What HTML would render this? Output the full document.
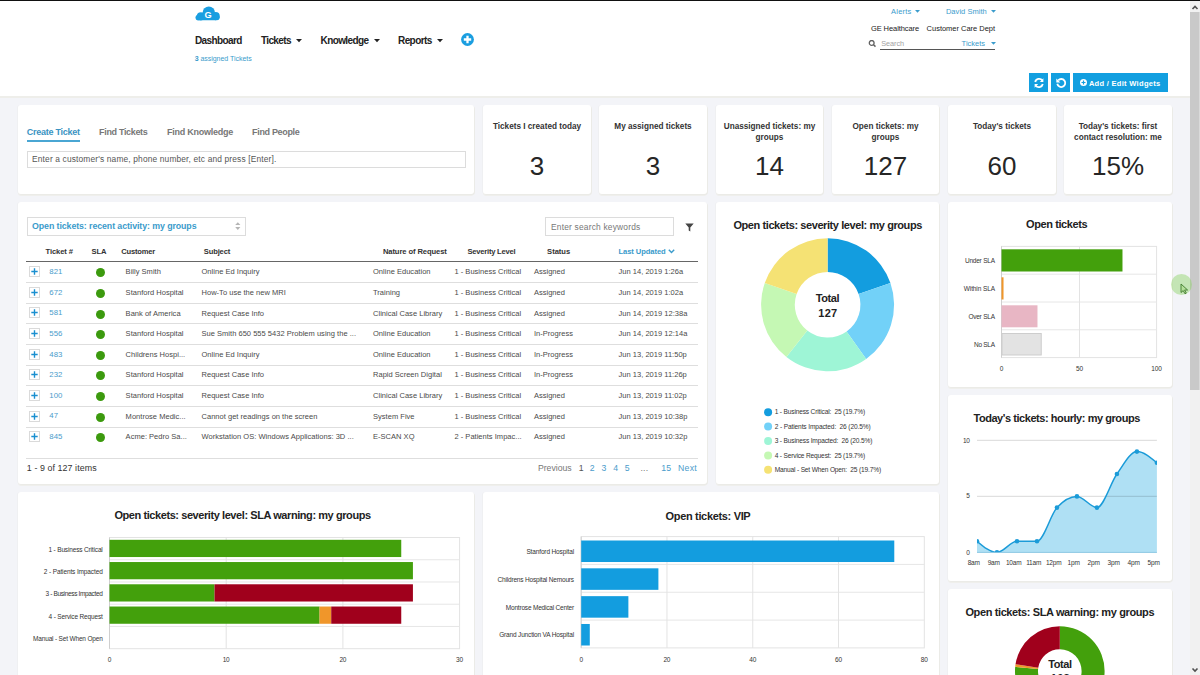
<!DOCTYPE html><html><head><meta charset="utf-8"><style>html,body{margin:0;padding:0}body{width:1200px;height:675px;overflow:hidden;position:relative;background:#f3f4f8;font-family:"Liberation Sans",sans-serif}</style></head><body><div style="position:absolute;left:0px;top:0px;width:1200px;height:96px;background:#fff;"></div><div style="position:absolute;left:0px;top:0px;width:1200px;height:1px;background:#111;"></div><div style="position:absolute;left:0px;top:96px;width:1190px;height:2px;background:#eeeeea;"></div><div style="position:absolute;left:1190px;top:0px;width:10px;height:675px;background:#f1f1f1;"></div><div style="position:absolute;left:1190px;top:0px;width:10px;height:1px;background:#111;"></div><div style="position:absolute;left:1190px;top:12px;width:9px;height:377.6px;background:#c9c9c9;"></div><div style="position:absolute;left:1199px;top:12px;width:1px;height:377.6px;background:#dadada;"></div><svg style="position:absolute;left:1190px;top:2px" width="10" height="10"><path d="M2.5 7 L5 4.5 L7.5 7" stroke="#505050" stroke-width="1.6" fill="none"/></svg><svg style="position:absolute;left:1190px;top:665px" width="10" height="10"><path d="M2.5 3.5 L5 6 L7.5 3.5" stroke="#505050" stroke-width="1.6" fill="none"/></svg><svg style="position:absolute;left:195px;top:6px" width="26" height="15" viewBox="0 0 26 15"><g fill="#1a9ee0"><circle cx="5.9" cy="10.3" r="4.1"/><circle cx="13.8" cy="6.7" r="6.2"/><circle cx="20.6" cy="10.1" r="4.1"/><rect x="2.8" y="9.5" width="19.8" height="4.7" rx="2"/><circle cx="3.4" cy="11.6" r="2.9"/><circle cx="21.8" cy="11.3" r="2.9"/></g><text x="13.2" y="11.9" text-anchor="middle" font-family="Liberation Sans" font-weight="bold" font-size="9.2" fill="#fff">G</text></svg><svg style="position:absolute;left:296.2px;top:39px" width="6" height="4"><path d="M0 0 L6 0 L3 3.3 Z" fill="#222"/></svg><svg style="position:absolute;left:373.6px;top:39px" width="6" height="4"><path d="M0 0 L6 0 L3 3.3 Z" fill="#222"/></svg><svg style="position:absolute;left:437.2px;top:39px" width="6" height="4"><path d="M0 0 L6 0 L3 3.3 Z" fill="#222"/></svg><svg style="position:absolute;left:461.2px;top:32.8px" width="13" height="13" viewBox="0 0 13 13"><circle cx="6.5" cy="6.5" r="6.4" fill="#1a9ee0"/><path d="M6.5 2.8 V10.2 M2.8 6.5 H10.2" stroke="#fff" stroke-width="2.3"/></svg><svg style="position:absolute;left:914.9px;top:10px" width="5" height="3"><path d="M0 0 L5 0 L2.5 2.8 Z" fill="#3b9ccc"/></svg><svg style="position:absolute;left:991.0px;top:10px" width="5" height="3"><path d="M0 0 L5 0 L2.5 2.8 Z" fill="#3b9ccc"/></svg><svg style="position:absolute;left:868px;top:40px" width="9" height="8" viewBox="0 0 9 8"><circle cx="3.7" cy="2.9" r="2.4" stroke="#606060" stroke-width="1.3" fill="none"/><path d="M5.5 4.8 L7.5 6.6" stroke="#606060" stroke-width="1.5"/></svg><svg style="position:absolute;left:991px;top:41.5px" width="5" height="3"><path d="M0 0 L5 0 L2.5 2.8 Z" fill="#3b9ccc"/></svg><div style="position:absolute;left:880px;top:49px;width:115px;height:1px;background:#555;"></div><div style="position:absolute;left:1029px;top:73px;width:19px;height:19px;background:#129fe0;"></div><div style="position:absolute;left:1051px;top:73px;width:19px;height:19px;background:#129fe0;"></div><div style="position:absolute;left:1073px;top:73px;width:95px;height:19px;background:#129fe0;"></div><svg style="position:absolute;left:1032.5px;top:76.5px" width="12" height="12" viewBox="0 0 12 12"><path d="M2.2 5 A4 4 0 0 1 9.4 3.6" stroke="#fff" stroke-width="1.8" fill="none"/><path d="M10.4 1.2 V5 H6.8 Z" fill="#fff"/><path d="M9.8 7 A4 4 0 0 1 2.6 8.4" stroke="#fff" stroke-width="1.8" fill="none"/><path d="M1.6 10.8 V7 H5.2 Z" fill="#fff"/></svg><svg style="position:absolute;left:1054.5px;top:76.5px" width="12" height="12" viewBox="0 0 12 12"><path d="M3.2 3.4 A4 4 0 1 1 2.3 6.8" stroke="#fff" stroke-width="1.8" fill="none"/><path d="M1.3 1.6 V5.6 H5.3 Z" fill="#fff"/></svg><svg style="position:absolute;left:1080px;top:79px" width="7" height="7" viewBox="0 0 7 7"><circle cx="3.5" cy="3.5" r="3.5" fill="#fff"/><path d="M3.5 1.5 V5.5 M1.5 3.5 H5.5" stroke="#129fe0" stroke-width="1.2"/></svg><div style="position:absolute;left:18px;top:105px;width:456px;height:89px;background:#fff;border-radius:3px;box-shadow:1px 1px 0 0 #ebebe7, 0 2px 0 0 #efefec, -1px 0 0 0 #eff0f2"></div><div style="position:absolute;left:483px;top:105px;width:108px;height:89px;background:#fff;border-radius:3px;box-shadow:1px 1px 0 0 #ebebe7, 0 2px 0 0 #efefec, -1px 0 0 0 #eff0f2"></div><div style="position:absolute;left:599px;top:105px;width:108px;height:89px;background:#fff;border-radius:3px;box-shadow:1px 1px 0 0 #ebebe7, 0 2px 0 0 #efefec, -1px 0 0 0 #eff0f2"></div><div style="position:absolute;left:716px;top:105px;width:107px;height:89px;background:#fff;border-radius:3px;box-shadow:1px 1px 0 0 #ebebe7, 0 2px 0 0 #efefec, -1px 0 0 0 #eff0f2"></div><div style="position:absolute;left:832px;top:105px;width:107px;height:89px;background:#fff;border-radius:3px;box-shadow:1px 1px 0 0 #ebebe7, 0 2px 0 0 #efefec, -1px 0 0 0 #eff0f2"></div><div style="position:absolute;left:948px;top:105px;width:108px;height:89px;background:#fff;border-radius:3px;box-shadow:1px 1px 0 0 #ebebe7, 0 2px 0 0 #efefec, -1px 0 0 0 #eff0f2"></div><div style="position:absolute;left:1064px;top:105px;width:108px;height:89px;background:#fff;border-radius:3px;box-shadow:1px 1px 0 0 #ebebe7, 0 2px 0 0 #efefec, -1px 0 0 0 #eff0f2"></div><div style="position:absolute;left:18px;top:202px;width:689px;height:282px;background:#fff;border-radius:3px;box-shadow:1px 1px 0 0 #ebebe7, 0 2px 0 0 #efefec, -1px 0 0 0 #eff0f2"></div><div style="position:absolute;left:716px;top:202px;width:223px;height:282px;background:#fff;border-radius:3px;box-shadow:1px 1px 0 0 #ebebe7, 0 2px 0 0 #efefec, -1px 0 0 0 #eff0f2"></div><div style="position:absolute;left:948px;top:202px;width:224px;height:185px;background:#fff;border-radius:3px;box-shadow:1px 1px 0 0 #ebebe7, 0 2px 0 0 #efefec, -1px 0 0 0 #eff0f2"></div><div style="position:absolute;left:948px;top:395px;width:224px;height:186px;background:#fff;border-radius:3px;box-shadow:1px 1px 0 0 #ebebe7, 0 2px 0 0 #efefec, -1px 0 0 0 #eff0f2"></div><div style="position:absolute;left:948px;top:589px;width:224px;height:131px;background:#fff;border-radius:3px;box-shadow:1px 1px 0 0 #ebebe7, 0 2px 0 0 #efefec, -1px 0 0 0 #eff0f2"></div><div style="position:absolute;left:18px;top:492px;width:456px;height:228px;background:#fff;border-radius:3px;box-shadow:1px 1px 0 0 #ebebe7, 0 2px 0 0 #efefec, -1px 0 0 0 #eff0f2"></div><div style="position:absolute;left:483px;top:492px;width:456px;height:228px;background:#fff;border-radius:3px;box-shadow:1px 1px 0 0 #ebebe7, 0 2px 0 0 #efefec, -1px 0 0 0 #eff0f2"></div><div style="position:absolute;left:27px;top:140px;width:53px;height:2px;background:#4aa6d3;"></div><div style="position:absolute;left:26.5px;top:150.5px;width:439px;height:17px;border:1px solid #dcdcdc;box-sizing:border-box"></div><div style="position:absolute;left:26.5px;top:217px;width:219px;height:19px;border:1px solid #dcdcdc;box-sizing:border-box"></div><svg style="position:absolute;left:235px;top:222px" width="6" height="9"><path d="M0.2 3.1 L2.8 0.3 L5.4 3.1 Z M0.2 4.9 L2.8 7.9 L5.4 4.9 Z" fill="#b5b5b5"/></svg><div style="position:absolute;left:545px;top:217px;width:129px;height:19px;border:1px solid #dcdcdc;box-sizing:border-box"></div><svg style="position:absolute;left:685px;top:222.5px" width="9" height="9" viewBox="0 0 9 9"><path d="M0.3 0.5 H8.7 L5.3 4.4 V8.5 L3.7 7.4 V4.4 Z" fill="#444"/></svg><svg style="position:absolute;left:668px;top:248.5px" width="7" height="5"><path d="M0.8 0.8 L3.5 3.6 L6.2 0.8" stroke="#3a9bcb" stroke-width="1.4" fill="none"/></svg><div style="position:absolute;left:26px;top:260.5px;width:672px;height:1.5px;background:#666;"></div><div style="position:absolute;left:26px;top:282.13px;width:672px;height:1px;background:#dedede;"></div><div style="position:absolute;left:29px;top:266.10px;width:11px;height:11px;border:1px solid #dadada;box-sizing:border-box"></div><svg style="position:absolute;left:29px;top:266.10px" width="11" height="11"><path d="M5.5 2.3 V8.7 M2.3 5.5 H8.7" stroke="#1a8fd0" stroke-width="1.4"/></svg><div style="position:absolute;left:95.7px;top:268.3px;width:9px;height:9px;border-radius:50%;background:#3c9a0e"></div><div style="position:absolute;left:26px;top:302.76px;width:672px;height:1px;background:#dedede;"></div><div style="position:absolute;left:29px;top:286.73px;width:11px;height:11px;border:1px solid #dadada;box-sizing:border-box"></div><svg style="position:absolute;left:29px;top:286.73px" width="11" height="11"><path d="M5.5 2.3 V8.7 M2.3 5.5 H8.7" stroke="#1a8fd0" stroke-width="1.4"/></svg><div style="position:absolute;left:95.7px;top:288.93px;width:9px;height:9px;border-radius:50%;background:#3c9a0e"></div><div style="position:absolute;left:26px;top:323.39px;width:672px;height:1px;background:#dedede;"></div><div style="position:absolute;left:29px;top:307.36px;width:11px;height:11px;border:1px solid #dadada;box-sizing:border-box"></div><svg style="position:absolute;left:29px;top:307.36px" width="11" height="11"><path d="M5.5 2.3 V8.7 M2.3 5.5 H8.7" stroke="#1a8fd0" stroke-width="1.4"/></svg><div style="position:absolute;left:95.7px;top:309.56px;width:9px;height:9px;border-radius:50%;background:#3c9a0e"></div><div style="position:absolute;left:26px;top:344.02px;width:672px;height:1px;background:#dedede;"></div><div style="position:absolute;left:29px;top:327.99px;width:11px;height:11px;border:1px solid #dadada;box-sizing:border-box"></div><svg style="position:absolute;left:29px;top:327.99px" width="11" height="11"><path d="M5.5 2.3 V8.7 M2.3 5.5 H8.7" stroke="#1a8fd0" stroke-width="1.4"/></svg><div style="position:absolute;left:95.7px;top:330.19px;width:9px;height:9px;border-radius:50%;background:#3c9a0e"></div><div style="position:absolute;left:26px;top:364.65px;width:672px;height:1px;background:#dedede;"></div><div style="position:absolute;left:29px;top:348.62px;width:11px;height:11px;border:1px solid #dadada;box-sizing:border-box"></div><svg style="position:absolute;left:29px;top:348.62px" width="11" height="11"><path d="M5.5 2.3 V8.7 M2.3 5.5 H8.7" stroke="#1a8fd0" stroke-width="1.4"/></svg><div style="position:absolute;left:95.7px;top:350.82px;width:9px;height:9px;border-radius:50%;background:#3c9a0e"></div><div style="position:absolute;left:26px;top:385.28px;width:672px;height:1px;background:#dedede;"></div><div style="position:absolute;left:29px;top:369.25px;width:11px;height:11px;border:1px solid #dadada;box-sizing:border-box"></div><svg style="position:absolute;left:29px;top:369.25px" width="11" height="11"><path d="M5.5 2.3 V8.7 M2.3 5.5 H8.7" stroke="#1a8fd0" stroke-width="1.4"/></svg><div style="position:absolute;left:95.7px;top:371.45px;width:9px;height:9px;border-radius:50%;background:#3c9a0e"></div><div style="position:absolute;left:26px;top:405.90999999999997px;width:672px;height:1px;background:#dedede;"></div><div style="position:absolute;left:29px;top:389.88px;width:11px;height:11px;border:1px solid #dadada;box-sizing:border-box"></div><svg style="position:absolute;left:29px;top:389.88px" width="11" height="11"><path d="M5.5 2.3 V8.7 M2.3 5.5 H8.7" stroke="#1a8fd0" stroke-width="1.4"/></svg><div style="position:absolute;left:95.7px;top:392.08px;width:9px;height:9px;border-radius:50%;background:#3c9a0e"></div><div style="position:absolute;left:26px;top:426.53999999999996px;width:672px;height:1px;background:#dedede;"></div><div style="position:absolute;left:29px;top:410.51px;width:11px;height:11px;border:1px solid #dadada;box-sizing:border-box"></div><svg style="position:absolute;left:29px;top:410.51px" width="11" height="11"><path d="M5.5 2.3 V8.7 M2.3 5.5 H8.7" stroke="#1a8fd0" stroke-width="1.4"/></svg><div style="position:absolute;left:95.7px;top:412.71px;width:9px;height:9px;border-radius:50%;background:#3c9a0e"></div><div style="position:absolute;left:29px;top:431.14px;width:11px;height:11px;border:1px solid #dadada;box-sizing:border-box"></div><svg style="position:absolute;left:29px;top:431.14px" width="11" height="11"><path d="M5.5 2.3 V8.7 M2.3 5.5 H8.7" stroke="#1a8fd0" stroke-width="1.4"/></svg><div style="position:absolute;left:95.7px;top:433.34px;width:9px;height:9px;border-radius:50%;background:#3c9a0e"></div><div style="position:absolute;left:26px;top:457.5px;width:672px;height:1px;background:#dedede;"></div><svg style="position:absolute;left:0;top:0" width="1200" height="675" viewBox="0 0 1200 675"><path d="M827.60 238.30 A66.5 66.5 0 0 1 890.43 283.00 L858.59 294.05 A32.8 32.8 0 0 0 827.60 272.00 Z" fill="#139ddf"/><path d="M890.43 283.00 A66.5 66.5 0 0 1 866.15 358.98 L846.62 331.53 A32.8 32.8 0 0 0 858.59 294.05 Z" fill="#72d1f8"/><path d="M866.15 358.98 A66.5 66.5 0 0 1 786.41 357.01 L807.29 330.55 A32.8 32.8 0 0 0 846.62 331.53 Z" fill="#9ef5d6"/><path d="M786.41 357.01 A66.5 66.5 0 0 1 764.77 283.00 L796.61 294.05 A32.8 32.8 0 0 0 807.29 330.55 Z" fill="#c5f8b4"/><path d="M764.77 283.00 A66.5 66.5 0 0 1 827.60 238.30 L827.60 272.00 A32.8 32.8 0 0 0 796.61 294.05 Z" fill="#f5e274"/><circle cx="768.1" cy="412.20" r="4" fill="#139ddf"/><circle cx="768.1" cy="426.60" r="4" fill="#72d1f8"/><circle cx="768.1" cy="441.00" r="4" fill="#9ef5d6"/><circle cx="768.1" cy="455.40" r="4" fill="#c5f8b4"/><circle cx="768.1" cy="469.80" r="4" fill="#f5e274"/><rect x="1001.5" y="246.4" width="155.0999999999999" height="111.20000000000002" fill="none" stroke="#e3e3e3" stroke-width="1"/><line x1="1001.5" y1="274.20" x2="1156.6" y2="274.20" stroke="#e6e6e6" stroke-width="1"/><line x1="1001.5" y1="302.00" x2="1156.6" y2="302.00" stroke="#e6e6e6" stroke-width="1"/><line x1="1001.5" y1="329.80" x2="1156.6" y2="329.80" stroke="#e6e6e6" stroke-width="1"/><line x1="1079.5" y1="246.4" x2="1079.5" y2="357.6" stroke="#e3e3e3" stroke-width="1"/><line x1="1001.5" y1="246.4" x2="1001.5" y2="357.6" stroke="#cfcfcf" stroke-width="1"/><rect x="1001.5" y="249.3" width="120.98" height="22.2" fill="#43a00c"/><rect x="1001.5" y="277.3" width="2.02" height="22.2" fill="#f0962a"/><rect x="1001.5" y="305.3" width="35.98" height="22" fill="#e8b6c4"/><rect x="1002.0" y="333.5" width="39.24" height="21.5" fill="#e3e3e3" stroke="#cdcdcd" stroke-width="1"/><defs><clipPath id="hc"><rect x="977" y="430" width="179.9000000000001" height="122.99999999999997"/></clipPath></defs><path d="M977.00 541.20 C983.66 546.80 990.33 552.40 996.99 552.40 C1003.65 552.40 1010.31 541.20 1016.98 541.20 C1023.64 541.20 1030.30 541.20 1036.97 541.20 C1043.63 541.20 1050.29 515.07 1056.96 507.60 C1063.62 500.13 1070.28 496.40 1076.94 496.40 C1083.61 496.40 1090.27 507.60 1096.93 507.60 C1103.60 507.60 1110.26 483.33 1116.92 474.00 C1123.59 464.67 1130.25 451.60 1136.91 451.60 C1143.57 451.60 1150.24 457.20 1156.90 462.80 L1156.9 552.4 L977 552.4 Z" fill="#afe0f4"/><line x1="977" y1="440.40" x2="1156.9" y2="440.40" stroke="rgba(0,0,0,0.12)" stroke-width="1.2"/><line x1="977" y1="496.40" x2="1156.9" y2="496.40" stroke="rgba(0,0,0,0.12)" stroke-width="1.2"/><g clip-path="url(#hc)"><path d="M977.00 541.20 C983.66 546.80 990.33 552.40 996.99 552.40 C1003.65 552.40 1010.31 541.20 1016.98 541.20 C1023.64 541.20 1030.30 541.20 1036.97 541.20 C1043.63 541.20 1050.29 515.07 1056.96 507.60 C1063.62 500.13 1070.28 496.40 1076.94 496.40 C1083.61 496.40 1090.27 507.60 1096.93 507.60 C1103.60 507.60 1110.26 483.33 1116.92 474.00 C1123.59 464.67 1130.25 451.60 1136.91 451.60 C1143.57 451.60 1150.24 457.20 1156.90 462.80" fill="none" stroke="#1b9bd8" stroke-width="1.5"/><circle cx="977.00" cy="541.20" r="2.3" fill="#1b9bd8"/><circle cx="996.99" cy="552.40" r="2.3" fill="#1b9bd8"/><circle cx="1016.98" cy="541.20" r="2.3" fill="#1b9bd8"/><circle cx="1036.97" cy="541.20" r="2.3" fill="#1b9bd8"/><circle cx="1056.96" cy="507.60" r="2.3" fill="#1b9bd8"/><circle cx="1076.94" cy="496.40" r="2.3" fill="#1b9bd8"/><circle cx="1096.93" cy="507.60" r="2.3" fill="#1b9bd8"/><circle cx="1116.92" cy="474.00" r="2.3" fill="#1b9bd8"/><circle cx="1136.91" cy="451.60" r="2.3" fill="#1b9bd8"/><circle cx="1156.90" cy="462.80" r="2.3" fill="#1b9bd8"/></g><line x1="977" y1="552.4" x2="1156.9" y2="552.4" stroke="#8fc9e3" stroke-width="1"/><path d="M1059.80 626.20 A44.8 44.8 0 1 1 1015.19 666.86 L1038.09 668.99 A21.8 21.8 0 1 0 1059.80 649.20 Z" fill="#43a00c"/><path d="M1015.19 666.86 A44.8 44.8 0 0 1 1015.53 664.15 L1038.26 667.66 A21.8 21.8 0 0 0 1038.09 668.99 Z" fill="#f0962a"/><path d="M1015.53 664.15 A44.8 44.8 0 0 1 1059.80 626.20 L1059.80 649.20 A21.8 21.8 0 0 0 1038.26 667.66 Z" fill="#a0001c"/><rect x="109.5" y="537.5" width="350.1" height="111.20000000000005" fill="none" stroke="#e3e3e3" stroke-width="1"/><line x1="109.5" y1="559.74" x2="459.6" y2="559.74" stroke="#e6e6e6" stroke-width="1"/><line x1="109.5" y1="581.98" x2="459.6" y2="581.98" stroke="#e6e6e6" stroke-width="1"/><line x1="109.5" y1="604.22" x2="459.6" y2="604.22" stroke="#e6e6e6" stroke-width="1"/><line x1="109.5" y1="626.46" x2="459.6" y2="626.46" stroke="#e6e6e6" stroke-width="1"/><line x1="226.20" y1="537.5" x2="226.20" y2="648.7" stroke="#e3e3e3" stroke-width="1"/><line x1="342.90" y1="537.5" x2="342.90" y2="648.7" stroke="#e3e3e3" stroke-width="1"/><line x1="109.5" y1="537.5" x2="109.5" y2="648.7" stroke="#cfcfcf" stroke-width="1"/><rect x="109.50" y="539.80" width="291.75" height="17.24" fill="#43a00c"/><rect x="109.50" y="562.04" width="303.42" height="17.24" fill="#43a00c"/><rect x="109.50" y="584.28" width="105.03" height="17.24" fill="#43a00c"/><rect x="214.53" y="584.28" width="198.39" height="17.24" fill="#a0001c"/><rect x="109.50" y="606.52" width="210.06" height="17.24" fill="#43a00c"/><rect x="319.56" y="606.52" width="11.67" height="17.24" fill="#f0962a"/><rect x="331.23" y="606.52" width="70.02" height="17.24" fill="#a0001c"/><rect x="581.2" y="536.6" width="343.0999999999999" height="111.29999999999995" fill="none" stroke="#e3e3e3" stroke-width="1"/><line x1="581.2" y1="564.42" x2="924.3" y2="564.42" stroke="#e6e6e6" stroke-width="1"/><line x1="581.2" y1="592.25" x2="924.3" y2="592.25" stroke="#e6e6e6" stroke-width="1"/><line x1="581.2" y1="620.08" x2="924.3" y2="620.08" stroke="#e6e6e6" stroke-width="1"/><line x1="666.98" y1="536.6" x2="666.98" y2="647.9" stroke="#e3e3e3" stroke-width="1"/><line x1="752.75" y1="536.6" x2="752.75" y2="647.9" stroke="#e3e3e3" stroke-width="1"/><line x1="838.52" y1="536.6" x2="838.52" y2="647.9" stroke="#e3e3e3" stroke-width="1"/><line x1="581.2" y1="536.6" x2="581.2" y2="647.9" stroke="#cfcfcf" stroke-width="1"/><rect x="581.2" y="540.50" width="313.08" height="21.52" fill="#139ddf"/><rect x="581.2" y="568.32" width="77.20" height="21.52" fill="#139ddf"/><rect x="581.2" y="596.15" width="47.18" height="21.52" fill="#139ddf"/><rect x="581.2" y="623.98" width="8.58" height="21.52" fill="#139ddf"/></svg><div id="t0" style="position:absolute;left:195.00px;top:36.34px;font-size:10px;line-height:10px;font-weight:700;color:#222;letter-spacing:-0.617px;white-space:nowrap;">Dashboard</div><div id="t1" style="position:absolute;left:261.00px;top:36.34px;font-size:10px;line-height:10px;font-weight:700;color:#222;letter-spacing:-0.633px;white-space:nowrap;">Tickets</div><div id="t2" style="position:absolute;left:320.50px;top:36.34px;font-size:10px;line-height:10px;font-weight:700;color:#222;letter-spacing:-0.593px;white-space:nowrap;">Knowledge</div><div id="t3" style="position:absolute;left:398.00px;top:36.34px;font-size:10px;line-height:10px;font-weight:700;color:#222;letter-spacing:-0.583px;white-space:nowrap;">Reports</div><div id="t4" style="position:absolute;left:194.65px;top:55.27px;font-size:7px;line-height:7px;font-weight:400;color:#3b9ccc;letter-spacing:-0.032px;white-space:nowrap;"><b>3</b> assigned Tickets</div><div id="t5" style="position:absolute;left:891.12px;top:8.05px;font-size:7.5px;line-height:7.5px;font-weight:400;color:#3b9ccc;letter-spacing:0.186px;white-space:nowrap;">Alerts</div><div id="t6" style="position:absolute;left:945.92px;top:8.05px;font-size:7.5px;line-height:7.5px;font-weight:400;color:#3b9ccc;letter-spacing:0.046px;white-space:nowrap;">David Smith</div><div id="t7" style="position:absolute;left:870.92px;top:24.65px;font-size:7.5px;line-height:7.5px;font-weight:400;color:#222;letter-spacing:-0.075px;white-space:nowrap;">GE Healthcare</div><div id="t8" style="position:absolute;left:926.62px;top:24.65px;font-size:7.5px;line-height:7.5px;font-weight:400;color:#222;letter-spacing:-0.022px;white-space:nowrap;">Customer Care Dept</div><div id="t9" style="position:absolute;left:881.24px;top:40.02px;font-size:7.3px;line-height:7.3px;font-weight:400;color:#a3a3a3;letter-spacing:-0.068px;white-space:nowrap;">Search</div><div id="t10" style="position:absolute;left:961.62px;top:39.85px;font-size:7.5px;line-height:7.5px;font-weight:400;color:#3b9ccc;letter-spacing:-0.014px;white-space:nowrap;">Tickets</div><div id="t11" style="position:absolute;left:1088.92px;top:79.55px;font-size:7.5px;line-height:7.5px;font-weight:700;color:#fff;letter-spacing:0.301px;white-space:nowrap;">Add / Edit Widgets</div><div id="t12" style="position:absolute;left:26.65px;top:127.78px;font-size:9px;line-height:9px;font-weight:700;color:#3a93c2;letter-spacing:-0.246px;white-space:nowrap;">Create Ticket</div><div id="t13" style="position:absolute;left:99.05px;top:127.78px;font-size:9px;line-height:9px;font-weight:700;color:#777;letter-spacing:-0.331px;white-space:nowrap;">Find Tickets</div><div id="t14" style="position:absolute;left:167.05px;top:127.78px;font-size:9px;line-height:9px;font-weight:700;color:#777;letter-spacing:-0.252px;white-space:nowrap;">Find Knowledge</div><div id="t15" style="position:absolute;left:252.05px;top:127.78px;font-size:9px;line-height:9px;font-weight:700;color:#777;letter-spacing:-0.330px;white-space:nowrap;">Find People</div><div id="t16" style="position:absolute;left:32.08px;top:155.29px;font-size:8.4px;line-height:8.4px;font-weight:400;color:#555;letter-spacing:0.148px;white-space:nowrap;">Enter a customer's name, phone number, etc and press [Enter].</div><div id="t17" style="position:absolute;left:492.93px;top:123.26px;font-size:8.2px;line-height:8.2px;font-weight:700;color:#333;letter-spacing:0.000px;white-space:nowrap;">Tickets I created today</div><div id="t18" style="position:absolute;left:529.77px;top:153.39px;font-size:26px;line-height:26px;font-weight:400;color:#262626;letter-spacing:0.000px;white-space:nowrap;">3</div><div id="t19" style="position:absolute;left:614.32px;top:123.26px;font-size:8.2px;line-height:8.2px;font-weight:700;color:#333;letter-spacing:0.000px;white-space:nowrap;">My assigned tickets</div><div id="t20" style="position:absolute;left:645.77px;top:153.39px;font-size:26px;line-height:26px;font-weight:400;color:#262626;letter-spacing:0.000px;white-space:nowrap;">3</div><div id="t21" style="position:absolute;left:723.77px;top:123.26px;font-size:8.2px;line-height:8.2px;font-weight:700;color:#333;letter-spacing:0.000px;white-space:nowrap;">Unassigned tickets: my</div><div id="t22" style="position:absolute;left:755.62px;top:133.96px;font-size:8.2px;line-height:8.2px;font-weight:700;color:#333;letter-spacing:0.000px;white-space:nowrap;">groups</div><div id="t23" style="position:absolute;left:755.04px;top:153.39px;font-size:26px;line-height:26px;font-weight:400;color:#262626;letter-spacing:0.000px;white-space:nowrap;">14</div><div id="t24" style="position:absolute;left:852.51px;top:123.26px;font-size:8.2px;line-height:8.2px;font-weight:700;color:#333;letter-spacing:0.000px;white-space:nowrap;">Open tickets: my</div><div id="t25" style="position:absolute;left:871.62px;top:133.96px;font-size:8.2px;line-height:8.2px;font-weight:700;color:#333;letter-spacing:0.000px;white-space:nowrap;">groups</div><div id="t26" style="position:absolute;left:863.80px;top:153.39px;font-size:26px;line-height:26px;font-weight:400;color:#262626;letter-spacing:0.000px;white-space:nowrap;">127</div><div id="t27" style="position:absolute;left:972.88px;top:123.26px;font-size:8.2px;line-height:8.2px;font-weight:700;color:#333;letter-spacing:0.000px;white-space:nowrap;">Today's tickets</div><div id="t28" style="position:absolute;left:987.54px;top:153.39px;font-size:26px;line-height:26px;font-weight:400;color:#262626;letter-spacing:0.000px;white-space:nowrap;">60</div><div id="t29" style="position:absolute;left:1078.65px;top:123.26px;font-size:8.2px;line-height:8.2px;font-weight:700;color:#333;letter-spacing:0.000px;white-space:nowrap;">Today's tickets: first</div><div id="t30" style="position:absolute;left:1074.09px;top:133.96px;font-size:8.2px;line-height:8.2px;font-weight:700;color:#333;letter-spacing:0.000px;white-space:nowrap;">contact resolution: me</div><div id="t31" style="position:absolute;left:1091.98px;top:153.39px;font-size:26px;line-height:26px;font-weight:400;color:#262626;letter-spacing:0.000px;white-space:nowrap;">15%</div><div id="t32" style="position:absolute;left:32.06px;top:222.45px;font-size:8.8px;line-height:8.8px;font-weight:700;color:#3a9bcb;letter-spacing:-0.082px;white-space:nowrap;">Open tickets: recent activity: my groups</div><div id="t33" style="position:absolute;left:551.08px;top:223.09px;font-size:8.4px;line-height:8.4px;font-weight:400;color:#777;letter-spacing:0.199px;white-space:nowrap;">Enter search keywords</div><div id="t34" style="position:absolute;left:45.52px;top:247.67px;font-size:7.6px;line-height:7.6px;font-weight:700;color:#333;letter-spacing:-0.107px;white-space:nowrap;">Ticket #</div><div id="t35" style="position:absolute;left:91.52px;top:247.67px;font-size:7.6px;line-height:7.6px;font-weight:700;color:#333;letter-spacing:-0.090px;white-space:nowrap;">SLA</div><div id="t36" style="position:absolute;left:121.22px;top:247.67px;font-size:7.6px;line-height:7.6px;font-weight:700;color:#333;letter-spacing:-0.206px;white-space:nowrap;">Customer</div><div id="t37" style="position:absolute;left:203.82px;top:247.67px;font-size:7.6px;line-height:7.6px;font-weight:700;color:#333;letter-spacing:-0.172px;white-space:nowrap;">Subject</div><div id="t38" style="position:absolute;left:382.92px;top:247.67px;font-size:7.6px;line-height:7.6px;font-weight:700;color:#333;letter-spacing:-0.094px;white-space:nowrap;">Nature of Request</div><div id="t39" style="position:absolute;left:467.52px;top:247.67px;font-size:7.6px;line-height:7.6px;font-weight:700;color:#333;letter-spacing:-0.230px;white-space:nowrap;">Severity Level</div><div id="t40" style="position:absolute;left:547.12px;top:247.67px;font-size:7.6px;line-height:7.6px;font-weight:700;color:#333;letter-spacing:-0.022px;white-space:nowrap;">Status</div><div id="t41" style="position:absolute;left:618.52px;top:247.67px;font-size:7.6px;line-height:7.6px;font-weight:700;color:#3a9bcb;letter-spacing:-0.082px;white-space:nowrap;">Last Updated</div><div id="t42" style="position:absolute;left:49.31px;top:268.00px;font-size:7.8px;line-height:7.8px;font-weight:400;color:#4a9ccb;letter-spacing:0.000px;white-space:nowrap;">821</div><div id="t43" style="position:absolute;left:125.62px;top:268.25px;font-size:7.5px;line-height:7.5px;font-weight:400;color:#4a4a4a;letter-spacing:0.024px;white-space:nowrap;">Billy Smith</div><div id="t44" style="position:absolute;left:201.53px;top:268.25px;font-size:7.5px;line-height:7.5px;font-weight:400;color:#4a4a4a;letter-spacing:0.024px;white-space:nowrap;">Online Ed Inquiry</div><div id="t45" style="position:absolute;left:373.02px;top:268.25px;font-size:7.5px;line-height:7.5px;font-weight:400;color:#4a4a4a;letter-spacing:0.024px;white-space:nowrap;">Online Education</div><div id="t46" style="position:absolute;left:454.43px;top:268.25px;font-size:7.5px;line-height:7.5px;font-weight:400;color:#4a4a4a;letter-spacing:0.024px;white-space:nowrap;">1 - Business Critical</div><div id="t47" style="position:absolute;left:533.92px;top:268.25px;font-size:7.5px;line-height:7.5px;font-weight:400;color:#4a4a4a;letter-spacing:0.024px;white-space:nowrap;">Assigned</div><div id="t48" style="position:absolute;left:618.52px;top:268.25px;font-size:7.5px;line-height:7.5px;font-weight:400;color:#4a4a4a;letter-spacing:0.024px;white-space:nowrap;">Jun 14, 2019 1:26a</div><div id="t49" style="position:absolute;left:49.31px;top:288.63px;font-size:7.8px;line-height:7.8px;font-weight:400;color:#4a9ccb;letter-spacing:0.000px;white-space:nowrap;">672</div><div id="t50" style="position:absolute;left:125.62px;top:288.88px;font-size:7.5px;line-height:7.5px;font-weight:400;color:#4a4a4a;letter-spacing:0.024px;white-space:nowrap;">Stanford Hospital</div><div id="t51" style="position:absolute;left:201.53px;top:288.88px;font-size:7.5px;line-height:7.5px;font-weight:400;color:#4a4a4a;letter-spacing:0.024px;white-space:nowrap;">How-To use the new MRI</div><div id="t52" style="position:absolute;left:373.02px;top:288.88px;font-size:7.5px;line-height:7.5px;font-weight:400;color:#4a4a4a;letter-spacing:0.024px;white-space:nowrap;">Training</div><div id="t53" style="position:absolute;left:454.43px;top:288.88px;font-size:7.5px;line-height:7.5px;font-weight:400;color:#4a4a4a;letter-spacing:0.024px;white-space:nowrap;">1 - Business Critical</div><div id="t54" style="position:absolute;left:533.92px;top:288.88px;font-size:7.5px;line-height:7.5px;font-weight:400;color:#4a4a4a;letter-spacing:0.024px;white-space:nowrap;">Assigned</div><div id="t55" style="position:absolute;left:618.52px;top:288.88px;font-size:7.5px;line-height:7.5px;font-weight:400;color:#4a4a4a;letter-spacing:0.024px;white-space:nowrap;">Jun 14, 2019 1:02a</div><div id="t56" style="position:absolute;left:49.31px;top:309.26px;font-size:7.8px;line-height:7.8px;font-weight:400;color:#4a9ccb;letter-spacing:0.000px;white-space:nowrap;">581</div><div id="t57" style="position:absolute;left:125.62px;top:309.51px;font-size:7.5px;line-height:7.5px;font-weight:400;color:#4a4a4a;letter-spacing:0.024px;white-space:nowrap;">Bank of America</div><div id="t58" style="position:absolute;left:201.53px;top:309.51px;font-size:7.5px;line-height:7.5px;font-weight:400;color:#4a4a4a;letter-spacing:0.024px;white-space:nowrap;">Request Case Info</div><div id="t59" style="position:absolute;left:373.02px;top:309.51px;font-size:7.5px;line-height:7.5px;font-weight:400;color:#4a4a4a;letter-spacing:0.024px;white-space:nowrap;">Clinical Case Library</div><div id="t60" style="position:absolute;left:454.43px;top:309.51px;font-size:7.5px;line-height:7.5px;font-weight:400;color:#4a4a4a;letter-spacing:0.024px;white-space:nowrap;">1 - Business Critical</div><div id="t61" style="position:absolute;left:533.92px;top:309.51px;font-size:7.5px;line-height:7.5px;font-weight:400;color:#4a4a4a;letter-spacing:0.024px;white-space:nowrap;">Assigned</div><div id="t62" style="position:absolute;left:618.52px;top:309.51px;font-size:7.5px;line-height:7.5px;font-weight:400;color:#4a4a4a;letter-spacing:0.024px;white-space:nowrap;">Jun 14, 2019 12:38a</div><div id="t63" style="position:absolute;left:49.31px;top:329.89px;font-size:7.8px;line-height:7.8px;font-weight:400;color:#4a9ccb;letter-spacing:0.000px;white-space:nowrap;">556</div><div id="t64" style="position:absolute;left:125.62px;top:330.14px;font-size:7.5px;line-height:7.5px;font-weight:400;color:#4a4a4a;letter-spacing:0.024px;white-space:nowrap;">Stanford Hospital</div><div id="t65" style="position:absolute;left:201.53px;top:330.14px;font-size:7.5px;line-height:7.5px;font-weight:400;color:#4a4a4a;letter-spacing:0.024px;white-space:nowrap;">Sue Smith 650 555 5432 Problem using the ...</div><div id="t66" style="position:absolute;left:373.02px;top:330.14px;font-size:7.5px;line-height:7.5px;font-weight:400;color:#4a4a4a;letter-spacing:0.024px;white-space:nowrap;">Online Education</div><div id="t67" style="position:absolute;left:454.43px;top:330.14px;font-size:7.5px;line-height:7.5px;font-weight:400;color:#4a4a4a;letter-spacing:0.024px;white-space:nowrap;">1 - Business Critical</div><div id="t68" style="position:absolute;left:533.92px;top:330.14px;font-size:7.5px;line-height:7.5px;font-weight:400;color:#4a4a4a;letter-spacing:0.024px;white-space:nowrap;">In-Progress</div><div id="t69" style="position:absolute;left:618.52px;top:330.14px;font-size:7.5px;line-height:7.5px;font-weight:400;color:#4a4a4a;letter-spacing:0.024px;white-space:nowrap;">Jun 14, 2019 12:14a</div><div id="t70" style="position:absolute;left:49.31px;top:350.52px;font-size:7.8px;line-height:7.8px;font-weight:400;color:#4a9ccb;letter-spacing:0.000px;white-space:nowrap;">483</div><div id="t71" style="position:absolute;left:125.62px;top:350.77px;font-size:7.5px;line-height:7.5px;font-weight:400;color:#4a4a4a;letter-spacing:0.024px;white-space:nowrap;">Childrens Hospi...</div><div id="t72" style="position:absolute;left:201.53px;top:350.77px;font-size:7.5px;line-height:7.5px;font-weight:400;color:#4a4a4a;letter-spacing:0.024px;white-space:nowrap;">Online Ed Inquiry</div><div id="t73" style="position:absolute;left:373.02px;top:350.77px;font-size:7.5px;line-height:7.5px;font-weight:400;color:#4a4a4a;letter-spacing:0.024px;white-space:nowrap;">Online Education</div><div id="t74" style="position:absolute;left:454.43px;top:350.77px;font-size:7.5px;line-height:7.5px;font-weight:400;color:#4a4a4a;letter-spacing:0.024px;white-space:nowrap;">1 - Business Critical</div><div id="t75" style="position:absolute;left:533.92px;top:350.77px;font-size:7.5px;line-height:7.5px;font-weight:400;color:#4a4a4a;letter-spacing:0.024px;white-space:nowrap;">In-Progress</div><div id="t76" style="position:absolute;left:618.52px;top:350.77px;font-size:7.5px;line-height:7.5px;font-weight:400;color:#4a4a4a;letter-spacing:0.024px;white-space:nowrap;">Jun 13, 2019 11:50p</div><div id="t77" style="position:absolute;left:49.31px;top:371.15px;font-size:7.8px;line-height:7.8px;font-weight:400;color:#4a9ccb;letter-spacing:0.000px;white-space:nowrap;">232</div><div id="t78" style="position:absolute;left:125.62px;top:371.40px;font-size:7.5px;line-height:7.5px;font-weight:400;color:#4a4a4a;letter-spacing:0.024px;white-space:nowrap;">Stanford Hospital</div><div id="t79" style="position:absolute;left:201.53px;top:371.40px;font-size:7.5px;line-height:7.5px;font-weight:400;color:#4a4a4a;letter-spacing:0.024px;white-space:nowrap;">Request Case Info</div><div id="t80" style="position:absolute;left:373.02px;top:371.40px;font-size:7.5px;line-height:7.5px;font-weight:400;color:#4a4a4a;letter-spacing:0.024px;white-space:nowrap;">Rapid Screen Digital</div><div id="t81" style="position:absolute;left:454.43px;top:371.40px;font-size:7.5px;line-height:7.5px;font-weight:400;color:#4a4a4a;letter-spacing:0.024px;white-space:nowrap;">1 - Business Critical</div><div id="t82" style="position:absolute;left:533.92px;top:371.40px;font-size:7.5px;line-height:7.5px;font-weight:400;color:#4a4a4a;letter-spacing:0.024px;white-space:nowrap;">In-Progress</div><div id="t83" style="position:absolute;left:618.52px;top:371.40px;font-size:7.5px;line-height:7.5px;font-weight:400;color:#4a4a4a;letter-spacing:0.024px;white-space:nowrap;">Jun 13, 2019 11:26p</div><div id="t84" style="position:absolute;left:49.31px;top:391.78px;font-size:7.8px;line-height:7.8px;font-weight:400;color:#4a9ccb;letter-spacing:0.000px;white-space:nowrap;">100</div><div id="t85" style="position:absolute;left:125.62px;top:392.03px;font-size:7.5px;line-height:7.5px;font-weight:400;color:#4a4a4a;letter-spacing:0.024px;white-space:nowrap;">Stanford Hospital</div><div id="t86" style="position:absolute;left:201.53px;top:392.03px;font-size:7.5px;line-height:7.5px;font-weight:400;color:#4a4a4a;letter-spacing:0.024px;white-space:nowrap;">Request Case Info</div><div id="t87" style="position:absolute;left:373.02px;top:392.03px;font-size:7.5px;line-height:7.5px;font-weight:400;color:#4a4a4a;letter-spacing:0.024px;white-space:nowrap;">Clinical Case Library</div><div id="t88" style="position:absolute;left:454.43px;top:392.03px;font-size:7.5px;line-height:7.5px;font-weight:400;color:#4a4a4a;letter-spacing:0.024px;white-space:nowrap;">1 - Business Critical</div><div id="t89" style="position:absolute;left:533.92px;top:392.03px;font-size:7.5px;line-height:7.5px;font-weight:400;color:#4a4a4a;letter-spacing:0.024px;white-space:nowrap;">Assigned</div><div id="t90" style="position:absolute;left:618.52px;top:392.03px;font-size:7.5px;line-height:7.5px;font-weight:400;color:#4a4a4a;letter-spacing:0.024px;white-space:nowrap;">Jun 13, 2019 11:02p</div><div id="t91" style="position:absolute;left:49.31px;top:412.41px;font-size:7.8px;line-height:7.8px;font-weight:400;color:#4a9ccb;letter-spacing:0.000px;white-space:nowrap;">47</div><div id="t92" style="position:absolute;left:125.62px;top:412.66px;font-size:7.5px;line-height:7.5px;font-weight:400;color:#4a4a4a;letter-spacing:0.024px;white-space:nowrap;">Montrose Medic...</div><div id="t93" style="position:absolute;left:201.53px;top:412.66px;font-size:7.5px;line-height:7.5px;font-weight:400;color:#4a4a4a;letter-spacing:0.024px;white-space:nowrap;">Cannot get readings on the screen</div><div id="t94" style="position:absolute;left:373.02px;top:412.66px;font-size:7.5px;line-height:7.5px;font-weight:400;color:#4a4a4a;letter-spacing:0.024px;white-space:nowrap;">System Five</div><div id="t95" style="position:absolute;left:454.43px;top:412.66px;font-size:7.5px;line-height:7.5px;font-weight:400;color:#4a4a4a;letter-spacing:0.024px;white-space:nowrap;">1 - Business Critical</div><div id="t96" style="position:absolute;left:533.92px;top:412.66px;font-size:7.5px;line-height:7.5px;font-weight:400;color:#4a4a4a;letter-spacing:0.024px;white-space:nowrap;">Assigned</div><div id="t97" style="position:absolute;left:618.52px;top:412.66px;font-size:7.5px;line-height:7.5px;font-weight:400;color:#4a4a4a;letter-spacing:0.024px;white-space:nowrap;">Jun 13, 2019 10:38p</div><div id="t98" style="position:absolute;left:49.31px;top:433.04px;font-size:7.8px;line-height:7.8px;font-weight:400;color:#4a9ccb;letter-spacing:0.000px;white-space:nowrap;">845</div><div id="t99" style="position:absolute;left:125.62px;top:433.29px;font-size:7.5px;line-height:7.5px;font-weight:400;color:#4a4a4a;letter-spacing:0.024px;white-space:nowrap;">Acme: Pedro Sa...</div><div id="t100" style="position:absolute;left:201.53px;top:433.29px;font-size:7.5px;line-height:7.5px;font-weight:400;color:#4a4a4a;letter-spacing:0.024px;white-space:nowrap;">Workstation OS: Windows Applications: 3D ...</div><div id="t101" style="position:absolute;left:373.02px;top:433.29px;font-size:7.5px;line-height:7.5px;font-weight:400;color:#4a4a4a;letter-spacing:0.024px;white-space:nowrap;">E-SCAN XQ</div><div id="t102" style="position:absolute;left:454.43px;top:433.29px;font-size:7.5px;line-height:7.5px;font-weight:400;color:#4a4a4a;letter-spacing:0.024px;white-space:nowrap;">2 - Patients Impac...</div><div id="t103" style="position:absolute;left:533.92px;top:433.29px;font-size:7.5px;line-height:7.5px;font-weight:400;color:#4a4a4a;letter-spacing:0.024px;white-space:nowrap;">Assigned</div><div id="t104" style="position:absolute;left:618.52px;top:433.29px;font-size:7.5px;line-height:7.5px;font-weight:400;color:#4a4a4a;letter-spacing:0.024px;white-space:nowrap;">Jun 13, 2019 10:32p</div><div id="t105" style="position:absolute;left:26.86px;top:463.67px;font-size:8.9px;line-height:8.9px;font-weight:400;color:#333;letter-spacing:0.067px;white-space:nowrap;">1 - 9 of 127 items</div><div id="t106" style="position:absolute;left:537.97px;top:464.24px;font-size:8.7px;line-height:8.7px;font-weight:400;color:#777;letter-spacing:-0.017px;white-space:nowrap;">Previous</div><div id="t107" style="position:absolute;left:578.77px;top:464.24px;font-size:8.7px;line-height:8.7px;font-weight:400;color:#555;letter-spacing:0.145px;white-space:nowrap;">1</div><div id="t108" style="position:absolute;left:589.87px;top:464.24px;font-size:8.7px;line-height:8.7px;font-weight:400;color:#4a9ccb;letter-spacing:0.145px;white-space:nowrap;">2</div><div id="t109" style="position:absolute;left:601.57px;top:464.24px;font-size:8.7px;line-height:8.7px;font-weight:400;color:#4a9ccb;letter-spacing:0.145px;white-space:nowrap;">3</div><div id="t110" style="position:absolute;left:613.17px;top:464.24px;font-size:8.7px;line-height:8.7px;font-weight:400;color:#4a9ccb;letter-spacing:0.145px;white-space:nowrap;">4</div><div id="t111" style="position:absolute;left:624.87px;top:464.24px;font-size:8.7px;line-height:8.7px;font-weight:400;color:#4a9ccb;letter-spacing:0.145px;white-space:nowrap;">5</div><div id="t112" style="position:absolute;left:640.57px;top:464.24px;font-size:8.7px;line-height:8.7px;font-weight:400;color:#777;letter-spacing:0.145px;white-space:nowrap;">...</div><div id="t113" style="position:absolute;left:661.27px;top:464.24px;font-size:8.7px;line-height:8.7px;font-weight:400;color:#4a9ccb;letter-spacing:0.145px;white-space:nowrap;">15</div><div id="t114" style="position:absolute;left:677.97px;top:464.24px;font-size:8.7px;line-height:8.7px;font-weight:400;color:#4a9ccb;letter-spacing:0.307px;white-space:nowrap;">Next</div><div id="t115" style="position:absolute;left:733.45px;top:220.09px;font-size:11px;line-height:11px;font-weight:700;color:#222;letter-spacing:-0.419px;white-space:nowrap;">Open tickets: severity level: my groups</div><div id="t116" style="position:absolute;left:815.76px;top:293.29px;font-size:11px;line-height:11px;font-weight:700;color:#222;letter-spacing:-0.397px;white-space:nowrap;">Total</div><div id="t117" style="position:absolute;left:818.36px;top:308.19px;font-size:11px;line-height:11px;font-weight:700;color:#222;letter-spacing:0.160px;white-space:nowrap;">127</div><div id="t118" style="position:absolute;left:774.67px;top:409.31px;font-size:6.6px;line-height:6.6px;font-weight:400;color:#333;letter-spacing:-0.166px;white-space:nowrap;">1 - Business Critical:&nbsp; 25 (19.7%)</div><div id="t119" style="position:absolute;left:774.67px;top:423.71px;font-size:6.6px;line-height:6.6px;font-weight:400;color:#333;letter-spacing:-0.122px;white-space:nowrap;">2 - Patients Impacted:&nbsp; 26 (20.5%)</div><div id="t120" style="position:absolute;left:774.67px;top:438.11px;font-size:6.6px;line-height:6.6px;font-weight:400;color:#333;letter-spacing:-0.160px;white-space:nowrap;">3 - Business Impacted:&nbsp; 26 (20.5%)</div><div id="t121" style="position:absolute;left:774.67px;top:452.51px;font-size:6.6px;line-height:6.6px;font-weight:400;color:#333;letter-spacing:-0.165px;white-space:nowrap;">4 - Service Request:&nbsp; 25 (19.7%)</div><div id="t122" style="position:absolute;left:774.67px;top:466.91px;font-size:6.6px;line-height:6.6px;font-weight:400;color:#333;letter-spacing:-0.168px;white-space:nowrap;">Manual - Set When Open:&nbsp; 25 (19.7%)</div><div id="t123" style="position:absolute;left:1026.05px;top:219.29px;font-size:11px;line-height:11px;font-weight:700;color:#222;letter-spacing:-0.405px;white-space:nowrap;">Open tickets</div><div id="t124" style="position:absolute;left:964.97px;top:257.90px;font-size:6.5px;line-height:6.5px;font-weight:400;color:#333;letter-spacing:-0.222px;white-space:nowrap;">Under SLA</div><div id="t125" style="position:absolute;left:963.77px;top:286.20px;font-size:6.5px;line-height:6.5px;font-weight:400;color:#333;letter-spacing:-0.104px;white-space:nowrap;">Within SLA</div><div id="t126" style="position:absolute;left:968.39px;top:314.10px;font-size:6.5px;line-height:6.5px;font-weight:400;color:#333;letter-spacing:-0.224px;white-space:nowrap;">Over SLA</div><div id="t127" style="position:absolute;left:974.08px;top:342.30px;font-size:6.5px;line-height:6.5px;font-weight:400;color:#333;letter-spacing:-0.297px;white-space:nowrap;">No SLA</div><div id="t128" style="position:absolute;left:999.69px;top:366.10px;font-size:6.5px;line-height:6.5px;font-weight:400;color:#333;letter-spacing:-0.190px;white-space:nowrap;">0</div><div id="t129" style="position:absolute;left:1075.98px;top:366.10px;font-size:6.5px;line-height:6.5px;font-weight:400;color:#333;letter-spacing:-0.190px;white-space:nowrap;">50</div><div id="t130" style="position:absolute;left:1151.36px;top:366.10px;font-size:6.5px;line-height:6.5px;font-weight:400;color:#333;letter-spacing:-0.190px;white-space:nowrap;">100</div><div id="t131" style="position:absolute;left:973.45px;top:412.89px;font-size:11px;line-height:11px;font-weight:700;color:#222;letter-spacing:-0.443px;white-space:nowrap;">Today's tickets: hourly: my groups</div><div id="t132" style="position:absolute;left:962.95px;top:437.70px;font-size:6.5px;line-height:6.5px;font-weight:400;color:#333;letter-spacing:-0.190px;white-space:nowrap;">10</div><div id="t133" style="position:absolute;left:966.37px;top:493.30px;font-size:6.5px;line-height:6.5px;font-weight:400;color:#333;letter-spacing:-0.190px;white-space:nowrap;">5</div><div id="t134" style="position:absolute;left:966.37px;top:549.70px;font-size:6.5px;line-height:6.5px;font-weight:400;color:#333;letter-spacing:-0.190px;white-space:nowrap;">0</div><div id="t135" style="position:absolute;left:967.67px;top:559.70px;font-size:6.5px;line-height:6.5px;font-weight:400;color:#333;letter-spacing:-0.190px;white-space:nowrap;">8am</div><div id="t136" style="position:absolute;left:987.65px;top:559.70px;font-size:6.5px;line-height:6.5px;font-weight:400;color:#333;letter-spacing:-0.190px;white-space:nowrap;">9am</div><div id="t137" style="position:absolute;left:1005.93px;top:559.70px;font-size:6.5px;line-height:6.5px;font-weight:400;color:#333;letter-spacing:-0.190px;white-space:nowrap;">10am</div><div id="t138" style="position:absolute;left:1026.16px;top:559.70px;font-size:6.5px;line-height:6.5px;font-weight:400;color:#333;letter-spacing:-0.190px;white-space:nowrap;">11am</div><div id="t139" style="position:absolute;left:1045.91px;top:559.70px;font-size:6.5px;line-height:6.5px;font-weight:400;color:#333;letter-spacing:-0.190px;white-space:nowrap;">12pm</div><div id="t140" style="position:absolute;left:1067.61px;top:559.70px;font-size:6.5px;line-height:6.5px;font-weight:400;color:#333;letter-spacing:-0.190px;white-space:nowrap;">1pm</div><div id="t141" style="position:absolute;left:1087.60px;top:559.70px;font-size:6.5px;line-height:6.5px;font-weight:400;color:#333;letter-spacing:-0.190px;white-space:nowrap;">2pm</div><div id="t142" style="position:absolute;left:1107.59px;top:559.70px;font-size:6.5px;line-height:6.5px;font-weight:400;color:#333;letter-spacing:-0.190px;white-space:nowrap;">3pm</div><div id="t143" style="position:absolute;left:1127.58px;top:559.70px;font-size:6.5px;line-height:6.5px;font-weight:400;color:#333;letter-spacing:-0.190px;white-space:nowrap;">4pm</div><div id="t144" style="position:absolute;left:1147.57px;top:559.70px;font-size:6.5px;line-height:6.5px;font-weight:400;color:#333;letter-spacing:-0.190px;white-space:nowrap;">5pm</div><div id="t145" style="position:absolute;left:965.45px;top:607.34px;font-size:11px;line-height:11px;font-weight:700;color:#222;letter-spacing:-0.384px;white-space:nowrap;">Open tickets: SLA warning: my groups</div><div id="t146" style="position:absolute;left:1048.26px;top:659.39px;font-size:11px;line-height:11px;font-weight:700;color:#222;letter-spacing:-0.397px;white-space:nowrap;">Total</div><div id="t147" style="position:absolute;left:1050.86px;top:672.89px;font-size:11px;line-height:11px;font-weight:700;color:#222;letter-spacing:0.160px;white-space:nowrap;">102</div><div id="t148" style="position:absolute;left:114.45px;top:510.29px;font-size:11px;line-height:11px;font-weight:700;color:#222;letter-spacing:-0.425px;white-space:nowrap;">Open tickets: severity level: SLA warning: my groups</div><div id="t149" style="position:absolute;left:48.47px;top:546.92px;font-size:6.5px;line-height:6.5px;font-weight:400;color:#333;letter-spacing:-0.156px;white-space:nowrap;">1 - Business Critical</div><div id="t150" style="position:absolute;left:43.77px;top:569.16px;font-size:6.5px;line-height:6.5px;font-weight:400;color:#333;letter-spacing:-0.120px;white-space:nowrap;">2 - Patients Impacted</div><div id="t151" style="position:absolute;left:45.48px;top:591.40px;font-size:6.5px;line-height:6.5px;font-weight:400;color:#333;letter-spacing:-0.350px;white-space:nowrap;">3 - Business Impacted</div><div id="t152" style="position:absolute;left:48.59px;top:613.64px;font-size:6.5px;line-height:6.5px;font-weight:400;color:#333;letter-spacing:-0.160px;white-space:nowrap;">4 - Service Request</div><div id="t153" style="position:absolute;left:33.08px;top:635.88px;font-size:6.5px;line-height:6.5px;font-weight:400;color:#333;letter-spacing:-0.173px;white-space:nowrap;">Manual - Set When Open</div><div id="t154" style="position:absolute;left:107.69px;top:656.70px;font-size:6.5px;line-height:6.5px;font-weight:400;color:#333;letter-spacing:-0.190px;white-space:nowrap;">0</div><div id="t155" style="position:absolute;left:222.68px;top:656.70px;font-size:6.5px;line-height:6.5px;font-weight:400;color:#333;letter-spacing:-0.190px;white-space:nowrap;">10</div><div id="t156" style="position:absolute;left:339.38px;top:656.70px;font-size:6.5px;line-height:6.5px;font-weight:400;color:#333;letter-spacing:-0.190px;white-space:nowrap;">20</div><div id="t157" style="position:absolute;left:456.08px;top:656.70px;font-size:6.5px;line-height:6.5px;font-weight:400;color:#333;letter-spacing:-0.190px;white-space:nowrap;">30</div><div id="t158" style="position:absolute;left:665.55px;top:510.59px;font-size:11px;line-height:11px;font-weight:700;color:#222;letter-spacing:-0.332px;white-space:nowrap;">Open tickets: VIP</div><div id="t159" style="position:absolute;left:526.39px;top:549.01px;font-size:6.5px;line-height:6.5px;font-weight:400;color:#333;letter-spacing:-0.135px;white-space:nowrap;">Stanford Hospital</div><div id="t160" style="position:absolute;left:497.47px;top:576.84px;font-size:6.5px;line-height:6.5px;font-weight:400;color:#333;letter-spacing:-0.172px;white-space:nowrap;">Childrens Hospital Nemours</div><div id="t161" style="position:absolute;left:505.79px;top:604.66px;font-size:6.5px;line-height:6.5px;font-weight:400;color:#333;letter-spacing:-0.196px;white-space:nowrap;">Montrose Medical Center</div><div id="t162" style="position:absolute;left:499.19px;top:632.49px;font-size:6.5px;line-height:6.5px;font-weight:400;color:#333;letter-spacing:-0.164px;white-space:nowrap;">Grand Junction VA Hospital</div><div id="t163" style="position:absolute;left:579.39px;top:656.90px;font-size:6.5px;line-height:6.5px;font-weight:400;color:#333;letter-spacing:-0.190px;white-space:nowrap;">0</div><div id="t164" style="position:absolute;left:663.45px;top:656.90px;font-size:6.5px;line-height:6.5px;font-weight:400;color:#333;letter-spacing:-0.190px;white-space:nowrap;">20</div><div id="t165" style="position:absolute;left:749.23px;top:656.90px;font-size:6.5px;line-height:6.5px;font-weight:400;color:#333;letter-spacing:-0.190px;white-space:nowrap;">40</div><div id="t166" style="position:absolute;left:835.00px;top:656.90px;font-size:6.5px;line-height:6.5px;font-weight:400;color:#333;letter-spacing:-0.190px;white-space:nowrap;">60</div><div id="t167" style="position:absolute;left:920.78px;top:656.90px;font-size:6.5px;line-height:6.5px;font-weight:400;color:#333;letter-spacing:-0.190px;white-space:nowrap;">80</div><div style="position:absolute;left:1171px;top:274px;width:21px;height:21px;border-radius:50%;background:rgba(140,210,100,0.45)"></div><svg style="position:absolute;left:1180px;top:283px" width="9" height="12" viewBox="0 0 9 12"><path d="M1 1 L1 9.5 L3.2 7.6 L5 10.8 L6.3 10.1 L4.6 7 L7.6 7 Z" fill="#b5e09a" stroke="#3f7a2e" stroke-width="0.9"/></svg></body></html>
